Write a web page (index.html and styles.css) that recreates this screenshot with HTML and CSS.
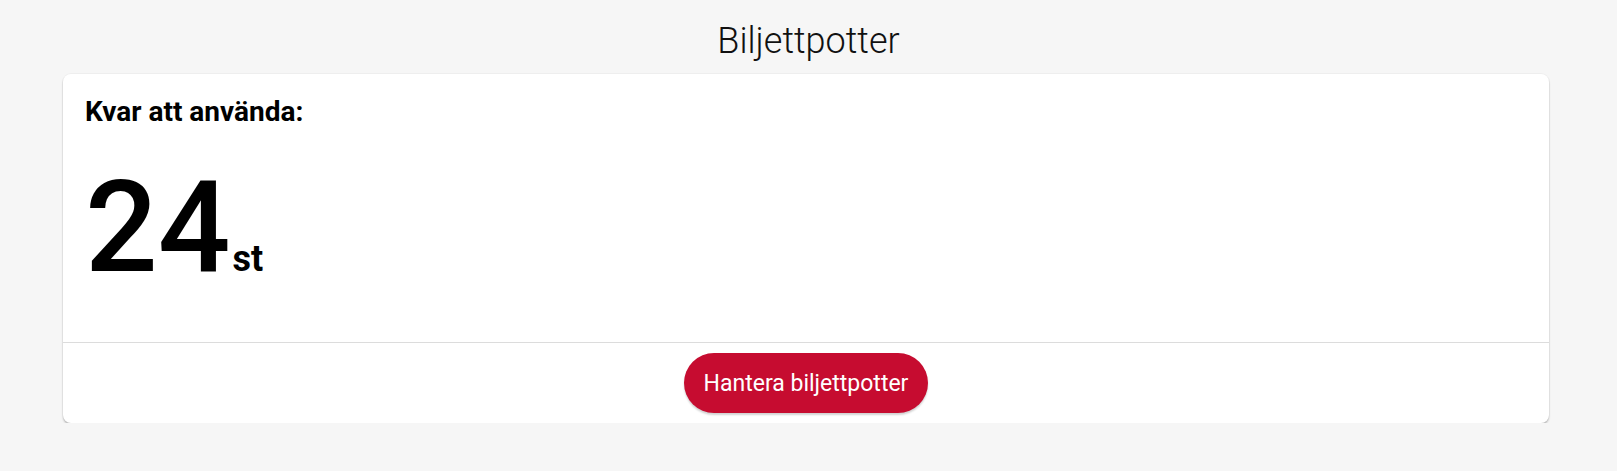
FILE: index.html
```html
<!DOCTYPE html>
<html lang="sv">
<head>
<meta charset="utf-8">
<title>Biljettpotter</title>
<link rel="stylesheet" href="styles.css">
</head>
<body>
<main class="page">
  <h1 class="page-title">Biljettpotter</h1>
  <section class="card">
    <div class="card-body">
      <h2 class="card-label">Kvar att använda:</h2>
      <div class="amount">
        <span class="amount-value">24</span>
        <span class="amount-unit">st</span>
      </div>
    </div>
    <div class="card-footer">
      <button class="btn-primary" type="button">Hantera biljettpotter</button>
    </div>
  </section>
</main>
</body>
</html>
```

FILE: styles.css
```css
html, body {
  margin: 0;
  padding: 0;
  background: #f6f6f6;
}
body {
  font-family: Roboto, "Liberation Sans", Arial, sans-serif;
  color: #000;
}
.page {
  display: flex;
  flex-direction: column;
}
.page-title {
  margin: 0 0 9px;
  padding-top: 17px;
  font-size: 36px;
  line-height: 48px;
  font-weight: 300;
  text-align: center;
  color: #111;
}
.card {
  margin: 0 68px 0 63px;
  background: #fff;
  border-radius: 8px;
  box-shadow: 0 0 0 1px rgba(0,0,0,0.03), 0 2px 2px rgba(0,0,0,0.22);
}
.card-body {
  padding: 20px 22px 51px;
  display: flex;
  flex-direction: column;
  gap: 33px;
}
.card-label {
  margin: 0;
  font-size: 28px;
  line-height: 36px;
  font-weight: 700;
}
.amount {
  display: flex;
  align-items: baseline;
  gap: 2px;
  line-height: 128px;
}
.amount-value {
  font-size: 128px;
  font-weight: 500;
  line-height: 128px;
}
.amount-unit {
  font-size: 36px;
  font-weight: 700;
  line-height: 36px;
}
.card-footer {
  border-top: 1px solid #dcdcdc;
  padding: 10px;
  display: flex;
  justify-content: center;
}
.btn-primary {
  width: 244px;
  height: 60px;
  border: 0;
  border-radius: 30px;
  background: #c60c30;
  color: #fff;
  font-family: Roboto, "Liberation Sans", Arial, sans-serif;
  font-size: 23px;
  font-weight: 400;
  box-shadow: 0 2px 2px rgba(0,0,0,0.18);
  cursor: pointer;
}
```
